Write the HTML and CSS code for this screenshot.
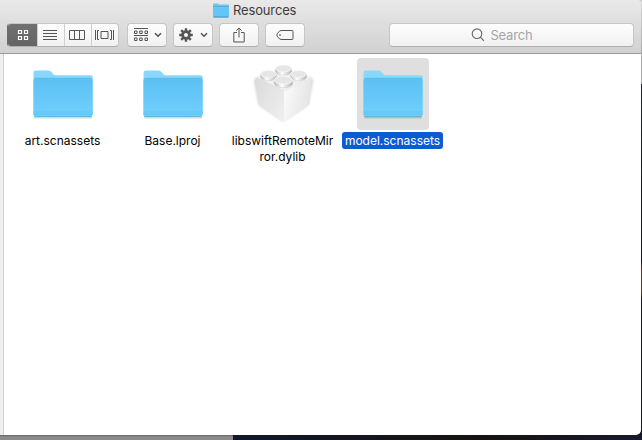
FILE: index.html
```html
<!DOCTYPE html>
<html lang="en">
<head>
<meta charset="utf-8">
<title>Resources</title>
<link rel="stylesheet" href="styles.css">
</head>
<body>
<svg class="defs" width="0" height="0" aria-hidden="true">
  <defs>
    <linearGradient id="front" x1="0" y1="0" x2="0" y2="1"><stop offset="0" stop-color="#5bc0f4"/><stop offset="1" stop-color="#71d0fd"/></linearGradient>
    <symbol id="folder" viewBox="0 0 64 54">
      <rect x="3" y="49" width="58" height="2.500" rx="1" fill="#000" opacity=".16"/>
      <path d="M2.500 48V5.500Q2.500 3.500 5 3.500H17.500C21 3.500 21.500 8.200 25 8.200H59.500Q61.800 8.200 61.800 10.500V48Z" fill="#87d8fc"/>
      <path d="M2.500 13Q2.500 11.300 4.500 11.300H59.500Q61.500 11.300 61.500 13V47.800Q61.500 49.800 59.500 49.800H4.500Q2.500 49.800 2.500 47.800Z" fill="url(#front)"/>
      <path d="M3.500 11.300H60.500" stroke="#55b8e9" stroke-width=".8"/>
      <path d="M2.500 45H61.500M2.500 47.200H61.500" stroke="#5fbeeb" stroke-width=".7"/>
      <path d="M3.500 49.500H60.500" stroke="#4facd8" stroke-width=".7"/>
    </symbol>
  </defs>
</svg>
<div class="screen">
<div class="window">
  <header class="header">
    <div class="title">
      <svg width="18" height="16" viewBox="0 0 18 16"><path d="M1 4.500Q1 3.200 2 3.200H6L7.500 4H16Q17 4 17 5V14H1Z" fill="#62b9e4"/><path d="M1 5.500H17V14.500Q17 15.500 16 15.500H2Q1 15.500 1 14.500Z" fill="#64c5f6"/><path d="M1 2.500Q1 1.500 2 1.500H6L7.500 2.500H16Q17 2.500 17 3.500V6H1Z" fill="#6fc6ef"/><path d="M1 4.500H17" stroke="#50afdc"/><path d="M1.500 15H16.500" stroke="#4697be"/></svg>
      <span class="title-text">Resources</span>
    </div>
    <div class="toolbar">
      <div class="segments">
        <div class="segment active"><svg width="12" height="12" viewBox="0 0 12 12" fill="none" stroke="#fff" stroke-width="1.200"><path d="M1.500 1.500h3v3h-3zM7.500 1.500h3v3h-3zM1.500 7.500h3v3h-3zM7.500 7.500h3v3h-3z"/></svg></div>
        <div class="segment"><svg width="14" height="12" viewBox="0 0 14 12" stroke="#555"><path d="M0 1.500h14M0 4.500h14M0 7.500h14M0 10.500h14"/></svg></div>
        <div class="segment"><svg width="16" height="12" viewBox="0 0 16 12" fill="none" stroke="#555"><path d="M.5 1.500h15v9H.5zM5.500 1.500v9M10.500 1.500v9"/></svg></div>
        <div class="segment"><svg width="19" height="12" viewBox="0 0 19 12" fill="none" stroke="#555"><path d="M.5 1v10M4 1.500h-1.500v9h1.500M6 2.500h7v7H6zM15 1.500h1.500v9h-1.500M18.500 1v10"/></svg></div>
      </div>
      <div class="button arrange">
        <svg width="16" height="14" viewBox="0 0 16 14" fill="none" stroke="#555"><path d="M1 .5h14M1 7.500h14"/><path d="M1.500 3h2.500v2.500H1.500zM6.700 3h2.500v2.500H6.700zM12 3h2.500v2.500H12zM1.500 10h2.500v2.500H1.500zM6.700 10h2.500v2.500H6.700zM12 10h2.500v2.500H12z"/></svg>
        <svg class="chevron" width="8" height="6" viewBox="0 0 8 6"><path d="M1 1.200L4 4.200L7 1.200"/></svg>
      </div>
      <div class="button gear">
        <svg width="14" height="14" viewBox="0 0 14 14"><g stroke="#555" stroke-width="2.400"><path d="M7 .2v13.600M.2 7h13.600M2.200 2.200l9.600 9.600M11.800 2.200l-9.600 9.600"/></g><circle cx="7" cy="7" r="4.800" fill="#555"/><circle cx="7" cy="7" r="2" fill="#f8f8f8"/></svg>
        <svg class="chevron" width="8" height="6" viewBox="0 0 8 6"><path d="M1 1.200L4 4.200L7 1.200"/></svg>
      </div>
      <div class="button share"><svg width="12" height="16" viewBox="0 0 12 16" fill="none" stroke="#555"><path d="M4 5.500H.8v9.500h10.400V5.500H8M6 10.500V1M3.300 3.700L6 1l2.700 2.700"/></svg></div>
      <div class="button tag"><svg width="18" height="12" viewBox="0 0 18 12" fill="none" stroke="#555"><path d="M5 1.500h11q1 0 1 1v7q0 1-1 1H5Q3.500 10.500 1.200 7.200Q.3 6 1.200 4.800Q3.500 1.500 5 1.500Z"/><circle cx="4" cy="6" r=".5"/></svg></div>
      <div class="search"><svg width="14" height="14" viewBox="0 0 14 14" fill="none" stroke="#666" stroke-width="1.100"><circle cx="6" cy="5.700" r="4.800"/><path d="M9.400 9.200L13 12.800"/></svg><span>Search</span></div>
    </div>
  </header>
  <main class="content">
    <div class="item"><div class="tile"><svg width="64" height="54"><use href="#folder"/></svg></div><div class="label"><span>art.scnassets</span></div></div>
    <div class="item"><div class="tile"><svg width="64" height="54"><use href="#folder"/></svg></div><div class="label"><span>Base.lproj</span></div></div>
    <div class="item"><div class="tile">
      <svg width="64" height="64" viewBox="0 0 64 64">
        <defs>
          <linearGradient id="left" x1="0" y1="0" x2="1" y2="1"><stop offset="0" stop-color="#dadada"/><stop offset="1" stop-color="#f0f0f0"/></linearGradient>
          <linearGradient id="right" x1="0" y1="0" x2="1" y2=".3"><stop offset="0" stop-color="#fcfcfc"/><stop offset="1" stop-color="#e4e4e4"/></linearGradient>
          <linearGradient id="stud" x1="0" y1="0" x2="1" y2="0"><stop offset="0" stop-color="#b8b8b8"/><stop offset=".4" stop-color="#fff"/><stop offset="1" stop-color="#b4b4b4"/></linearGradient>
          <filter id="soft" x="-20%" y="-20%" width="140%" height="140%"><feGaussianBlur stdDeviation="1.700"/></filter>
          <g id="knob"><path d="M-8 0V3A8 3.800 0 0 0 8 3V0Z" fill="url(#stud)" stroke="#c4c4c4" stroke-width=".4"/><ellipse rx="7.900" ry="3.500" fill="#e6e6e6" stroke="#f6f6f6" stroke-width=".8"/></g>
        </defs>
        <path d="M3 17L8 43L32 59L57 43L62 17Z" fill="#000" opacity=".2" filter="url(#soft)"/>
        <path d="M4.500 15L32.500 5L61 15L33 29Z" fill="#f1f1f1"/>
        <path d="M4.500 15L33 29V60.500L9 43Q7.500 42 7.300 40.500Z" fill="url(#left)"/>
        <path d="M33 29L61 15L58.500 40.500Q58.300 42 57 43L33 60.500Z" fill="url(#right)"/>
        <use href="#knob" x="32.500" y="6.500"/><use href="#knob" x="17.500" y="12"/><use href="#knob" x="47.500" y="12"/><g transform="translate(32.500 18) scale(1.150)"><use href="#knob"/></g>
      </svg></div><div class="label"><span>libswiftRemoteMir</span><span>ror.dylib</span></div></div>
    <div class="item selected"><div class="tile"><svg width="64" height="54"><use href="#folder"/></svg></div><div class="label"><span>model.scnassets</span></div></div>
  </main>
</div>
<div class="edge"></div>
</div>
<footer class="desktop"><div class="panel"></div></footer>
</body>
</html>
```
FILE: styles.css
```css
* { box-sizing: border-box; }
body {
  margin: 0;
  width: 642px;
  height: 440px;
  overflow: hidden;
  background: #11131a;
  font-family: Inter, "Liberation Sans", sans-serif;
}
svg { display: block; flex: none; }
.defs { position: absolute; }
.screen {
  display: flex;
  height: 435px;
  background: linear-gradient(#c4c4c4 0 84px, #11131a 84px);
}
.edge {
  width: 1px;
  background: linear-gradient(#d8d8d8, #aaa 54px 84px, #20242d 84px, #15161d 195px, #15161d 262px, #70381f 272px 290px, #15161d 300px);
}
.window {
  width: 641px;
  height: 435px;
  background: #fff;
  border-radius: 0 4px 5px 0;
  overflow: hidden;
}
.header {
  height: 54px;
  background: linear-gradient(#e9e9e9, #d1d1d1);
  border-bottom: 1px solid #999;
}
.title {
  height: 23px;
  padding: 2px 0 0 212px;
  display: flex;
  align-items: flex-start;
  gap: 3px;
}
.title-text {
  font-size: 13px;
  line-height: 17px;
  letter-spacing: -0.15px;
  color: #3c3c3c;
}
.toolbar {
  display: flex;
  padding-left: 7px;
  height: 24px;
}
.segments, .button, .search {
  height: 24px;
  display: flex;
  align-items: center;
  justify-content: center;
  border: 1px solid #c6c6c6;
  border-bottom-color: #afafaf;
  border-radius: 4px;
  background: linear-gradient(#fdfdfd, #f1f1f1);
}
.segments {
  width: 112px;
  overflow: hidden;
  margin-right: 8px;
  justify-content: flex-start;
  border-left-color: #6b6b6b;
}
.segment {
  flex: none;
  width: 27px;
  height: 22px;
  display: flex;
  align-items: center;
  justify-content: center;
  padding-right: 2px;
  border-left: 1px solid #d0d0d0;
}
.segment.active {
  width: 29px;
  height: 24px;
  padding: 0 0 0 1px;
  border-left: 0;
  background: linear-gradient(#707070, #656565);
}
.button { width: 40px; margin-right: 6px; }
.arrange { gap: 5px; }
.gear { gap: 7px; }
.chevron { fill: none; stroke: #555; stroke-width: 1.6; }
.search {
  width: 245px;
  margin-left: 78px;
  gap: 5px;
  padding-right: 19px;
  font-size: 13px;
  letter-spacing: -0.15px;
  color: #a5a5a5;
}
.content {
  height: 381px;
  margin-left: 3px;
  border-left: 1px solid #d0d0d0;
  box-shadow: -3px 0 #efefef;
  display: flex;
  padding: 4px 0 0 4px;
}
.item {
  width: 110px;
  display: flex;
  flex-direction: column;
  align-items: center;
}
.tile {
  width: 72px;
  height: 72px;
  display: flex;
  align-items: center;
  justify-content: center;
  border-radius: 4px;
}
.label {
  margin: 2px 1px 0 0;
  padding: 1px 3px 0;
  display: flex;
  flex-direction: column;
  align-items: center;
  font-size: 12px;
  line-height: 16px;
  color: #000;
  white-space: nowrap;
  border-radius: 3px;
}
.selected .tile { background: #dfdfdf; }
.selected .label { background: #0b5bd3; color: #fff; }
.desktop {
  height: 5px;
  background: linear-gradient(90deg, #0c0d13, #10182c 40%, #17120f 75%, #171a30);
}
.panel {
  width: 233px;
  height: 5px;
  background: linear-gradient(#666, #8c8a8b 40%);
}
```
